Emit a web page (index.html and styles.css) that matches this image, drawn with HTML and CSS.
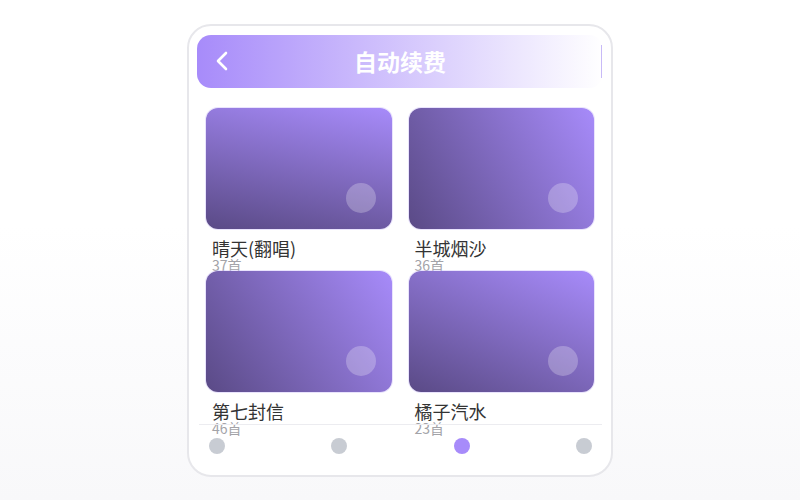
FILE: index.html
```html
<!DOCTYPE html>
<html lang="zh-CN">

<head>
  <meta charset="UTF-8">
  <meta name="viewport" content="width=device-width, initial-scale=1.0">
  <title>自动续费</title>
  <link rel="stylesheet" href="styles.css">
</head>

<body>
  <div class="phone">
    <header class="top-bar">
      <span class="back">
        <svg width="14" height="20" viewBox="0 0 14 20">
          <path d="M11 2 L3 10 L11 18" fill="none" stroke="#fff" stroke-width="2.6" stroke-linecap="round" stroke-linejoin="round" />
        </svg>
      </span>
      <h1>自动续费</h1>
      <span class="edge"></span>
    </header>

    <main class="album-grid">
      <div class="album">
        <div class="cover cover-1"><span class="dot"></span></div>
        <p class="name">晴天(翻唱)</p>
        <p class="count">37首</p>
      </div>
      <div class="album">
        <div class="cover cover-2"><span class="dot"></span></div>
        <p class="name">半城烟沙</p>
        <p class="count">36首</p>
      </div>
      <div class="album">
        <div class="cover cover-3"><span class="dot"></span></div>
        <p class="name">第七封信</p>
        <p class="count">46首</p>
      </div>
      <div class="album">
        <div class="cover cover-4"><span class="dot"></span></div>
        <p class="name">橘子汽水</p>
        <p class="count">23首</p>
      </div>
    </main>

    <nav class="tabs">
      <span class="tab"></span>
      <span class="tab"></span>
      <span class="tab active"></span>
      <span class="tab"></span>
    </nav>
  </div>
</body>

</html>
```

FILE: styles.css
```css
* {
  box-sizing: border-box;
}

body {
  margin: 0;
  height: 100vh;
  display: flex;
  align-items: center;
  justify-content: center;
  font-family: 'Noto Sans CJK SC', 'Noto Sans', sans-serif;
  background: linear-gradient(#ffffff 45%, #f8f8fa);
}

.phone {
  position: relative;
  width: 426px;
  height: 453px;
  padding: 9px 8px 0 8px;
  background-color: #fff;
  border: 2px solid #e7e7eb;
  border-radius: 24px;
  overflow: hidden;
}

.top-bar {
  height: 53px;
  display: flex;
  align-items: center;
  padding: 0 1px 0 18px;
  border-radius: 14px;
  background: linear-gradient(90deg, #a78bfa, #ffffff);
}

.back {
  width: 14px;
  height: 20px;
  display: flex;
}

.top-bar h1 {
  flex: 1;
  margin: 0 0 0 -30px;
  text-align: center;
  color: #fff;
  font-size: 23px;
  font-weight: 700;
  line-height: 53px;
}

.edge {
  width: 1px;
  height: 33px;
  background-color: #c8baf7;
}

.album-grid {
  display: grid;
  grid-template-columns: 1fr 1fr;
  column-gap: 17px;
  padding: 20px 9px 0 9px;
}

.album {
  height: 163px;
}

.cover {
  height: 121px;
  border-radius: 12px;
  display: flex;
  align-items: flex-end;
  justify-content: flex-end;
  padding: 16px;
  box-shadow: 0 0 0 1px rgba(200, 185, 250, 0.4);
}

.cover-1 {
  background: linear-gradient(192deg, #a78bfa, #5a4a86);
}

.cover-2 {
  background: linear-gradient(60deg, #5a4a86, #a78bfa);
}

.cover-3 {
  background: linear-gradient(55deg, #5a4a86, #a78bfa);
}

.cover-4 {
  background: linear-gradient(25deg, #5a4a86, #a78bfa);
}

.dot {
  width: 30px;
  height: 30px;
  border-radius: 50%;
  background-color: rgba(255, 255, 255, 0.25);
}

.name {
  margin: 10px 0 0 6px;
  font-size: 18px;
  line-height: 18px;
  color: #333;
}

.count {
  margin: 0 0 0 6px;
  font-size: 14px;
  line-height: 16px;
  color: #a3a3a8;
}

.tabs {
  position: absolute;
  left: 10px;
  right: 9px;
  bottom: 0;
  height: 51px;
  display: flex;
  justify-content: space-between;
  padding: 13px 10px 0 10px;
  border-top: 1px solid #ececf0;
}

.tab {
  width: 16px;
  height: 16px;
  border-radius: 50%;
  background-color: #c8ccd3;
}

.tab.active {
  background-color: #a78bfa;
}
```
